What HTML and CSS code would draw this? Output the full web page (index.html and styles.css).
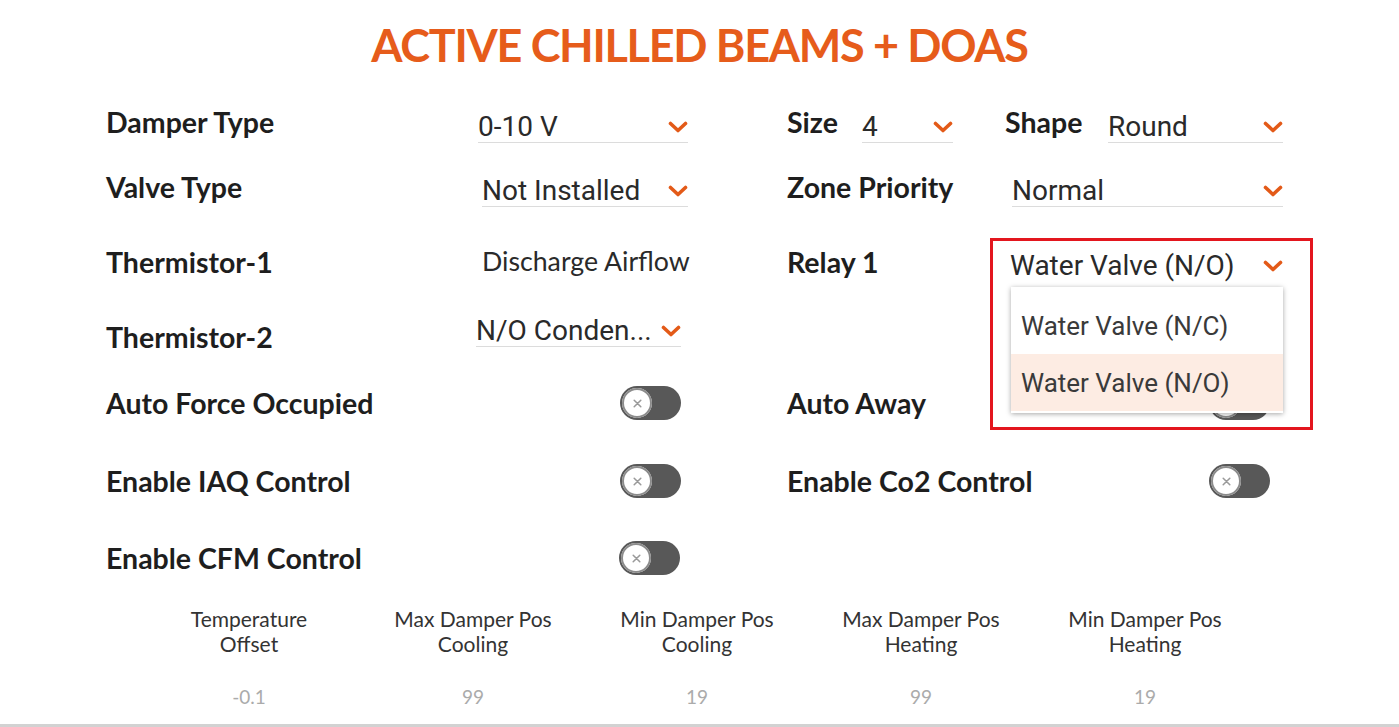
FILE: index.html
```html
<!DOCTYPE html>
<html>
<head>
<meta charset="utf-8">
<link rel="stylesheet" href="styles.css">
</head>
<body>
<div class="page">
  <h1 class="title">ACTIVE CHILLED BEAMS + DOAS</h1>

  <div class="form">
    <!-- row 1 -->
    <div class="label">Damper Type</div>
    <div class="select r1 sel-left"><span class="val">0-10 V</span><svg class="chev" viewBox="0 0 20 12"><path d="M2.5 2.5 L10 9.5 L17.5 2.5"/></svg></div>
    <div class="spacer"></div>
    <div class="rcell">
      <div class="label size-l">Size</div>
      <div class="select r1 sel-size"><span class="val">4</span><svg class="chev" viewBox="0 0 20 12"><path d="M2.5 2.5 L10 9.5 L17.5 2.5"/></svg></div>
      <div class="label shape-l">Shape</div>
      <div class="select r1 sel-shape"><span class="val">Round</span><svg class="chev" viewBox="0 0 20 12"><path d="M2.5 2.5 L10 9.5 L17.5 2.5"/></svg></div>
    </div>

    <!-- row 2 -->
    <div class="label">Valve Type</div>
    <div class="select r2 sel-left sel-ni"><span class="val">Not Installed</span><svg class="chev" viewBox="0 0 20 12"><path d="M2.5 2.5 L10 9.5 L17.5 2.5"/></svg></div>
    <div class="spacer"></div>
    <div class="rcell">
      <div class="label rlabel">Zone Priority</div>
      <div class="select r2 sel-right"><span class="val">Normal</span><svg class="chev" viewBox="0 0 20 12"><path d="M2.5 2.5 L10 9.5 L17.5 2.5"/></svg></div>
    </div>

    <!-- row 3 -->
    <div class="label">Thermistor-1</div>
    <div class="static">Discharge Airflow</div>
    <div class="spacer"></div>
    <div class="rcell">
      <div class="label rlabel">Relay 1</div>
      <div class="select r3 sel-right sel-relay"><span class="val">Water Valve (N/O)</span><svg class="chev" viewBox="0 0 20 12"><path d="M2.5 2.5 L10 9.5 L17.5 2.5"/></svg></div>
    </div>

    <!-- row 4 -->
    <div class="label r4l">Thermistor-2</div>
    <div class="select r4 sel-t2"><span class="val">N/O Conden...</span><svg class="chev" viewBox="0 0 20 12"><path d="M2.5 2.5 L10 9.5 L17.5 2.5"/></svg></div>
    <div class="spacer"></div>
    <div class="rcell"></div>

    <!-- row 5 -->
    <div class="label">Auto Force Occupied</div>
    <div class="tcell"><div class="toggle"><div class="knob"><svg viewBox="0 0 10 10"><path d="M2 2 L8 8 M8 2 L2 8"/></svg></div></div></div>
    <div class="spacer"></div>
    <div class="rcell">
      <div class="label rlabel">Auto Away</div>
      <div class="tcell tright"><div class="toggle"><div class="knob"><svg viewBox="0 0 10 10"><path d="M2 2 L8 8 M8 2 L2 8"/></svg></div></div></div>
    </div>

    <!-- row 6 -->
    <div class="label">Enable IAQ Control</div>
    <div class="tcell"><div class="toggle"><div class="knob"><svg viewBox="0 0 10 10"><path d="M2 2 L8 8 M8 2 L2 8"/></svg></div></div></div>
    <div class="spacer"></div>
    <div class="rcell">
      <div class="label rlabel">Enable Co2 Control</div>
      <div class="tcell tright"><div class="toggle"><div class="knob"><svg viewBox="0 0 10 10"><path d="M2 2 L8 8 M8 2 L2 8"/></svg></div></div></div>
    </div>

    <!-- row 7 -->
    <div class="label">Enable CFM Control</div>
    <div class="tcell"><div class="toggle t7"><div class="knob"><svg viewBox="0 0 10 10"><path d="M2 2 L8 8 M8 2 L2 8"/></svg></div></div></div>
    <div class="spacer"></div>
    <div class="rcell"></div>
  </div>

  <div class="stats">
    <div class="stat"><div class="stat-h">Temperature<br>Offset</div><div class="stat-v">-0.1</div></div>
    <div class="stat"><div class="stat-h">Max Damper Pos<br>Cooling</div><div class="stat-v">99</div></div>
    <div class="stat"><div class="stat-h">Min Damper Pos<br>Cooling</div><div class="stat-v">19</div></div>
    <div class="stat"><div class="stat-h">Max Damper Pos<br>Heating</div><div class="stat-v">99</div></div>
    <div class="stat"><div class="stat-h">Min Damper Pos<br>Heating</div><div class="stat-v">19</div></div>
  </div>

  <div class="menu">
    <div class="menu-item">Water Valve (N/C)</div>
    <div class="menu-item active">Water Valve (N/O)</div>
  </div>
  <div class="highlight-box"></div>
</div>
</body>
</html>
```

FILE: styles.css
```css
html, body {
  margin: 0;
  padding: 0;
  background: #ffffff;
}

.page {
  position: relative;
  width: 1399px;
  height: 724px;
  border-bottom: 3px solid #d2d2d2;
  overflow: hidden;
  font-family: Lato, "Open Sans", sans-serif;
  color: #1f1f1f;
}

.title {
  margin: 0;
  padding-top: 18px;
  height: 55px;
  text-align: center;
  font-family: Lato, sans-serif;
  font-weight: 700;
  font-size: 45px;
  line-height: 55px;
  letter-spacing: -1.3px;
  color: #e65c1b;
}

.form {
  margin-top: 17px;
  padding-left: 106px;
  display: grid;
  grid-template-columns: 372px 210px 99px 496px;
  grid-template-rows: 64px 66px 84px 64px 70px 86px 68px;
  align-items: center;
}

.label {
  font-family: Lato, sans-serif;
  font-weight: 700;
  font-size: 28.5px;
  line-height: 34px;
  color: #1e1e1e;
  white-space: nowrap;
}

.r4l { margin-top: 2px; }

.select {
  display: flex;
  align-items: center;
  justify-content: space-between;
  height: 30px;
  border-bottom: 1px solid #dcdcdc;
  box-sizing: content-box;
}

.select .val {
  font-family: Roboto, "Liberation Sans", sans-serif;
  font-size: 28px;
  line-height: 30px;
  color: #2a2a2a;
  white-space: nowrap;
}

.chev {
  width: 20px;
  height: 12px;
  flex: none;
  fill: none;
  stroke: #e35a18;
  stroke-width: 3.6;
  stroke-linecap: round;
  stroke-linejoin: round;
}

.r1 { margin-top: 11px; }
.r2 { margin-top: 9px; }
.r3 { margin-top: 8px; }
.r4 { margin-bottom: 9px; }

.sel-left { margin-left: 0; }
.sel-ni { margin-left: 4px; }
.sel-t2 { margin-left: -2px; margin-right: 7px; }

.static {
  font-family: Lato, sans-serif;
  font-size: 26.7px;
  line-height: 32px;
  color: #2a2a2a;
  margin-left: 4px;
  margin-bottom: 3px;
  white-space: nowrap;
}

.rcell {
  display: flex;
  align-items: center;
  height: 100%;
}

.size-l { width: 75px; flex: none; }
.sel-size { width: 91px; flex: none; }
.shape-l { width: 103px; flex: none; margin-left: 52px; }
.sel-shape { width: 175px; flex: none; }

.rlabel { width: 225px; flex: none; }
.sel-right { width: 271px; flex: none; }
.sel-relay { border-bottom-color: transparent; margin-left: -2px; width: 273px; }

.tcell {
  display: flex;
  justify-content: flex-end;
  padding-right: 7px;
}
.tright {
  flex: 1;
  padding-right: 13px;
}

.toggle {
  width: 61px;
  height: 34px;
  border-radius: 17px;
  background: #585858;
  display: flex;
  align-items: center;
  padding-left: 2px;
  box-sizing: border-box;
}
.t7 { margin-right: 1px; }

.knob {
  width: 30px;
  height: 30px;
  border-radius: 50%;
  background: #ffffff;
  box-shadow: inset 0 0 0 2px #8c8c8c;
  display: flex;
  align-items: center;
  justify-content: center;
}
.knob svg {
  width: 11px;
  height: 11px;
  fill: none;
  stroke: #9a9a9a;
  stroke-width: 1.4;
  stroke-linecap: round;
}

.stats {
  margin-top: 14px;
  margin-left: 137px;
  display: grid;
  grid-template-columns: repeat(5, 224px);
}
.stat { text-align: center; }
.stat-h {
  font-family: Lato, sans-serif;
  font-size: 21px;
  line-height: 25px;
  color: #333333;
}
.stat-v {
  margin-top: 28px;
  font-family: Lato, sans-serif;
  font-size: 19px;
  line-height: 25px;
  color: #ababab;
}

.menu {
  position: absolute;
  left: 1011px;
  top: 287px;
  width: 272px;
  height: 126px;
  background: #ffffff;
  box-shadow: 0 1px 5px rgba(0, 0, 0, 0.35);
  padding-top: 10px;
  box-sizing: border-box;
  display: flex;
  flex-direction: column;
}
.menu-item {
  height: 57px;
  padding-left: 10px;
  display: flex;
  align-items: center;
  font-family: Roboto, "Liberation Sans", sans-serif;
  font-size: 26px;
  color: #3a3a3a;
}
.menu-item.active { background: #fdece3; }

.highlight-box {
  position: absolute;
  left: 990px;
  top: 238px;
  width: 317px;
  height: 186px;
  border: 3px solid #e3161e;
}
```
